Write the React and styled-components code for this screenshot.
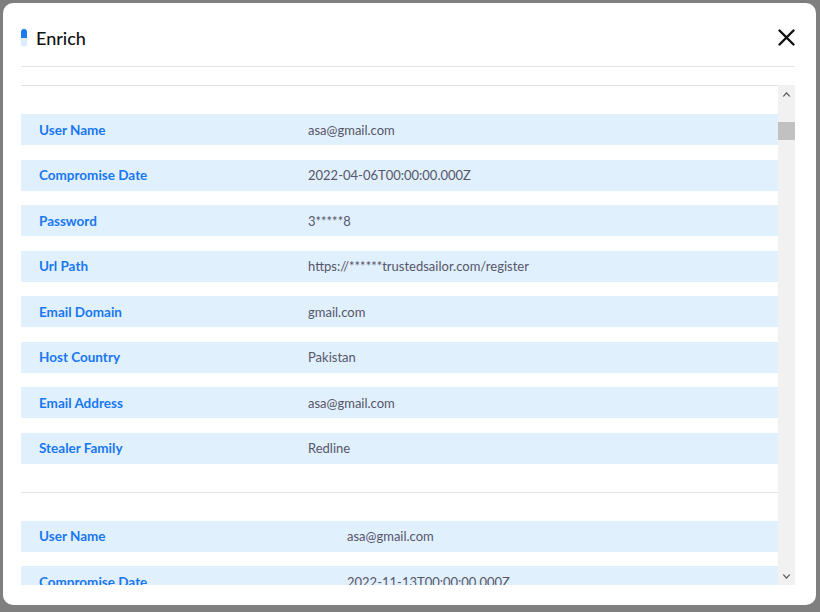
import styled, { createGlobalStyle } from 'styled-components';

const GlobalStyle = createGlobalStyle`
    html, body {
        margin: 0;
        padding: 0;
        background: #7f7f7f;
        font-family: Lato, "Liberation Sans", sans-serif;
    }
`;

//the data shown in the modal, one object per leak record
const records = [
    {
        labelWidth: 287,
        fields: [
            ['User Name', 'asa@gmail.com'],
            ['Compromise Date', '2022-04-06T00:00:00.000Z'],
            ['Password', '3*****8'],
            ['Url Path', 'https://******trustedsailor.com/register'],
            ['Email Domain', 'gmail.com'],
            ['Host Country', 'Pakistan'],
            ['Email Address', 'asa@gmail.com'],
            ['Stealer Family', 'Redline'],
        ],
    },
    {
        labelWidth: 326,
        fields: [
            ['User Name', 'asa@gmail.com'],
            ['Compromise Date', '2022-11-13T00:00:00.000Z'],
            ['Password', 'a*****3'],
            ['Url Path', 'https://******login.live.com/oauth20_authorize.srf'],
            ['Email Domain', 'gmail.com'],
            ['Host Country', 'Pakistan'],
            ['Email Address', 'asa@gmail.com'],
            ['Stealer Family', 'Raccoon'],
        ],
    },
];

const Modal = styled.div`
    box-sizing: border-box;
    width: 813px;
    height: 602px;
    margin: 3px 0 0 3px;
    padding: 0 21px 20px 18px;
    background: #fff;
    border-radius: 10px;
    display: flex;
    flex-direction: column;
`;

const Header = styled.div`
    display: flex;
    align-items: center;
    justify-content: space-between;
    height: 21px;
    padding: 24px 0 18px;
    border-bottom: 1px solid #e4e4e4;
`;

const Title = styled.h2`
    margin: 0;
    display: flex;
    align-items: center;
    gap: 9px;
    font-size: 18px;
    font-weight: 500;
    color: #111;
`;

const Pill = styled.span`
    display: flex;
    flex-direction: column;
    width: 6px;
    height: 18px;
    border-radius: 3px;
    overflow: hidden;
    &::before {
        content: '';
        height: 9px;
        background: #1a7cf5;
    }
    &::after {
        content: '';
        height: 9px;
        background: #dcedfd;
    }
`;

const CloseButton = styled.button`
    border: none;
    background: none;
    padding: 0;
    width: 17px;
    height: 17px;
    cursor: pointer;
    display: flex;
`;

const Body = styled.div`
    display: flex;
    margin-top: 18px;
    height: 500px;
`;

const List = styled.div`
    flex: 1;
    overflow: hidden;
`;

const Section = styled.section`
    border-top: 1px solid #e2e2e2;
    padding: 28px 0;
    display: flex;
    flex-direction: column;
    gap: 14.5px;
`;

const Row = styled.div`
    display: grid;
    grid-template-columns: ${(props) => props.labelWidth}px 1fr;
    align-items: center;
    height: 31px;
    background: #e1f0fd;
    font-size: 13px;
`;

const Label = styled.span`
    padding-left: 18px;
    font-size: 13.5px;
    font-weight: 700;
    color: #1877f2;
`;

const Value = styled.span`
    color: #56566a;
`;

const ScrollTrack = styled.div`
    position: relative;
    width: 17px;
    background: #f1f1f1;
    display: flex;
    flex-direction: column;
    justify-content: space-between;
`;

const ScrollArrow = styled.div`
    height: 17px;
    display: flex;
    align-items: center;
    justify-content: center;
`;

const ScrollThumb = styled.div`
    position: absolute;
    left: 0;
    right: 0;
    top: 37px;
    height: 18px;
    background: #c1c1c1;
`;

function Chevron({ up }) {
    return (
        <svg width='9' height='6' viewBox='0 0 9 6'>
            <path d={up ? 'M0.5 5.5 L4.5 1 L8.5 5.5 L7 5.5 L4.5 2.8 L2 5.5 Z' : 'M0.5 0.5 L4.5 5 L8.5 0.5 L7 0.5 L4.5 3.2 L2 0.5 Z'} fill='#505050' />
        </svg>
    );
}

export default function App() {
    return (
        <>
            <GlobalStyle />
            <Modal>
                <Header>
                    <Title>
                        <Pill />
                        Enrich
                    </Title>
                    <CloseButton aria-label='close'>
                        <svg width='17' height='17' viewBox='0 0 17 17'>
                            <path d='M1.5 1.5 L15.5 15.5 M15.5 1.5 L1.5 15.5' stroke='#111' strokeWidth='2.4' strokeLinecap='round' />
                        </svg>
                    </CloseButton>
                </Header>
                <Body>
                    <List>
                        {records.map((record, i) => (
                            <Section key={i}>
                                {record.fields.map(([label, value]) => (
                                    <Row key={label} labelWidth={record.labelWidth}>
                                        <Label>{label}</Label>
                                        <Value>{value}</Value>
                                    </Row>
                                ))}
                            </Section>
                        ))}
                    </List>
                    <ScrollTrack>
                        <ScrollArrow>
                            <Chevron up />
                        </ScrollArrow>
                        <ScrollThumb />
                        <ScrollArrow>
                            <Chevron />
                        </ScrollArrow>
                    </ScrollTrack>
                </Body>
            </Modal>
        </>
    );
}
